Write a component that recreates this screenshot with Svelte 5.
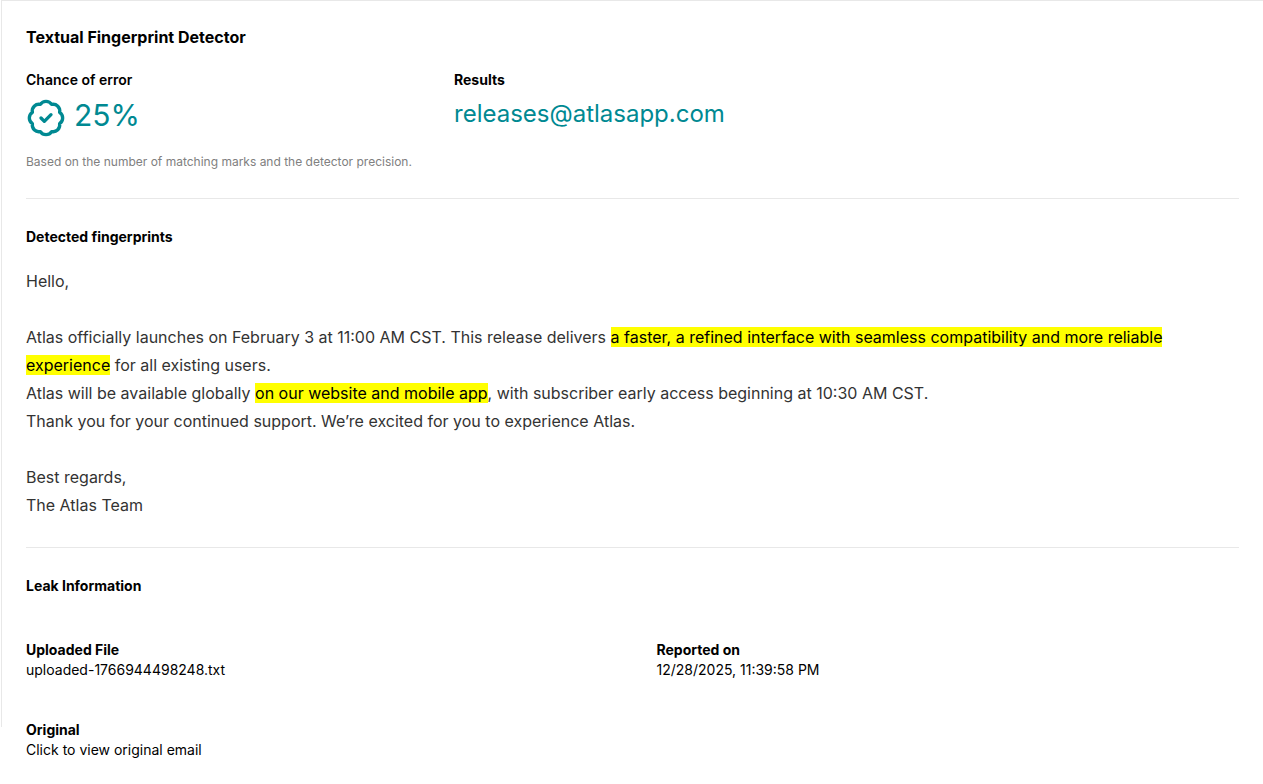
<script>
  const errorChance = 25;
  const recipient = 'releases@atlasapp.com';
</script>

<div class="page">
<main class="panel">
  <h1>Textual Fingerprint Detector</h1>

  <section class="summary">
    <div>
      <h2 class="label">Chance of error</h2>
      <div class="score">
        <svg viewBox="0 0 24 24" width="40" height="40" fill="none" stroke="currentColor" stroke-width="2" stroke-linecap="round" stroke-linejoin="round" aria-hidden="true">
          <path d="M3.85 8.62a4 4 0 0 1 4.78-4.77 4 4 0 0 1 6.74 0 4 4 0 0 1 4.78 4.78 4 4 0 0 1 0 6.74 4 4 0 0 1-4.77 4.78 4 4 0 0 1-6.75 0 4 4 0 0 1-4.78-4.77 4 4 0 0 1 0-6.76Z" />
          <path d="m9 12 2 2 4-4" />
        </svg>
        <span>{errorChance}%</span>
      </div>
      <p class="note">Based on the number of matching marks and the detector precision.</p>
    </div>
    <div>
      <h2>Results</h2>
      <p class="recipient">{recipient}</p>
    </div>
  </section>

  <section class="fingerprints">
    <h2>Detected fingerprints</h2>
    <div class="message">
      <p>Hello,</p>
      <p>
        Atlas officially launches on February 3 at 11:00 AM CST. This release delivers <mark>a faster, a refined interface with seamless compatibility and more reliable experience</mark> for all existing users.<br />
        Atlas will be available globally <mark>on our website and mobile app</mark>, with subscriber early access beginning at 10:30 AM CST.<br />
        Thank you for your continued support. We’re excited for you to experience Atlas.
      </p>
      <p>Best regards,<br />The Atlas Team</p>
    </div>
  </section>

  <section class="leak">
    <h2>Leak Information</h2>
    <dl>
      <div><dt>Uploaded File</dt><dd>uploaded-1766944498248.txt</dd></div>
      <div><dt>Reported on</dt><dd>12/28/2025, 11:39:58 PM</dd></div>
      <div><dt>Original</dt><dd><button type="button">Click to view original email</button></dd></div>
    </dl>
  </section>
</main>
</div>

<style>
  .page { min-height: 100vh; }
  .panel {
    box-sizing: border-box;
    height: calc(100vh - 57px);
    margin-left: 1px;
    padding: 24px;
    border: solid #e8e8e8;
    border-width: 1px 0 0 1px;
    font: 14px/20px Inter, sans-serif;
    color: #000;
  }
  h1, h2, p, dl, dd { margin: 0; }
  h1 { font-size: 16px; line-height: 24px; font-weight: 700; }
  h2, dt { font-size: 14px; line-height: 20px; font-weight: 700; }
  .label { font-weight: 600; }
  .summary {
    display: grid;
    grid-template-columns: 386px 1fr;
    column-gap: 42px;
    margin-top: 21px;
    padding-bottom: 26px;
    border-bottom: 1px solid #e8e8e8;
  }
  .score {
    display: flex;
    gap: 8px;
    margin-top: 8px;
    font-size: 30px;
    line-height: 34px;
    color: #008992;
  }
  .note { margin-top: 14px; font-size: 12px; line-height: 20px; color: #808080; }
  .recipient { margin-top: 8px; font-size: 24px; line-height: 32px; color: #008992; }
  .fingerprints { padding: 28px 0; border-bottom: 1px solid #e8e8e8; }
  .message { margin-top: 20px; font-size: 16px; line-height: 28px; color: #333; }
  .message p + p { margin-top: 28px; }
  mark { background: #ff0; color: #000; }
  .leak { padding-top: 28px; }
  dl { display: grid; grid-template-columns: 1fr 1fr; gap: 40px 48px; margin-top: 44px; }
  button { padding: 0; border: 0; background: none; font: inherit; color: inherit; cursor: pointer; }
</style>
